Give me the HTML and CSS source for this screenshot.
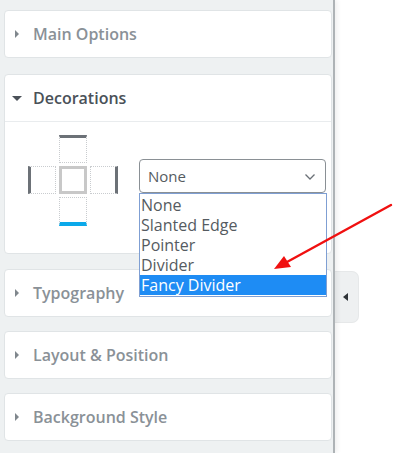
FILE: index.html
```html
<!DOCTYPE html>
<html>
<head>
<meta charset="utf-8">
<link rel="stylesheet" href="styles.css">
</head>
<body>
<div class="page">
  <aside class="panel">
    <section class="card">
      <div class="card-head"><span class="caret-right"></span><span class="title">Main Options</span></div>
    </section>
    <section class="card open">
      <div class="card-head"><span class="caret-down"></span><span class="title">Decorations</span></div>
      <div class="card-body">
        <div class="deco-grid">
          <div class="cell empty"></div>
          <div class="cell bar-top"></div>
          <div class="cell empty"></div>
          <div class="cell bar-left"></div>
          <div class="cell center"></div>
          <div class="cell bar-right"></div>
          <div class="cell empty"></div>
          <div class="cell bar-bottom"></div>
          <div class="cell empty"></div>
        </div>
        <div class="select-wrap">
          <div class="select">
            <span>None</span>
            <svg class="chev" width="12" height="8" viewBox="0 0 12 8"><path d="M1.5 1.5 L6 6 L10.5 1.5" fill="none" stroke="#6a7076" stroke-width="1.3"/></svg>
          </div>
          <ul class="options">
            <li>None</li>
            <li>Slanted Edge</li>
            <li>Pointer</li>
            <li>Divider</li>
            <li class="sel">Fancy Divider</li>
          </ul>
        </div>
      </div>
    </section>
    <section class="card after-open">
      <div class="card-head"><span class="caret-right"></span><span class="title">Typography</span></div>
    </section>
    <section class="card">
      <div class="card-head"><span class="caret-right"></span><span class="title">Layout &amp; Position</span></div>
    </section>
    <section class="card">
      <div class="card-head"><span class="caret-right"></span><span class="title">Background Style</span></div>
    </section>
  </aside>
  <div class="canvas">
    <div class="toggle"><span class="toggle-tri"></span></div>
  </div>
  <svg class="arrow" width="417" height="453" viewBox="0 0 417 453">
    <line x1="391" y1="205" x2="287" y2="262" stroke="#f01010" stroke-width="2.4" stroke-linecap="round"/>
    <polygon points="274,269 284,256 291,267" fill="#f01010"/>
  </svg>
</div>
</body>
</html>
```
FILE: styles.css
```css
* { box-sizing: border-box; }
html, body { margin: 0; padding: 0; background: #fff; }
body { font-family: "Open Sans", "Liberation Sans", sans-serif; }
.page {
  position: relative;
  display: flex;
  width: 417px;
  height: 453px;
  overflow: hidden;
}
.panel {
  width: 335px;
  flex: none;
  background: #eef1f2;
  border-right: 2px solid #aeb3b6;
  padding: 10px 1px 0 4px;
  display: flex;
  flex-direction: column;
  gap: 14px;
  box-shadow: 2px 0 5px rgba(0,0,0,0.07);
  position: relative;
  z-index: 1;
}
.card {
  background: #fff;
  border: 1px solid #e0e4e6;
  border-radius: 4px;
  flex: none;
}
.card.open { margin-top: 2px; }
.card.after-open { margin-top: 1px; }
.card-head {
  height: 46px;
  display: flex;
  align-items: center;
  padding-left: 9px;
}
.open .card-head { border-bottom: 1px solid #e9ecee; height: 47px; }
.title {
  font-family: "Open Sans", sans-serif;
  font-weight: 600;
  font-size: 16px;
  color: #8a9197;
}
.open .title { color: #4a5158; }
.caret-right {
  width: 0; height: 0;
  border-top: 4px solid transparent;
  border-bottom: 4px solid transparent;
  border-left: 4px solid #80878d;
  margin-left: 1px;
  margin-right: 14px;
}
.caret-down {
  width: 0; height: 0;
  border-left: 5px solid transparent;
  border-right: 5px solid transparent;
  border-top: 5px solid #4a5158;
  margin-left: -2px;
  margin-right: 11px;
}
.card-body {
  height: 131px;
  display: flex;
  padding: 13px 0 0 23px;
  gap: 21px;
}
.deco-grid {
  display: grid;
  grid-template-columns: 28px 28px 28px;
  grid-template-rows: 28px 28px 29px;
  gap: 3px;
  flex: none;
}
.cell.empty { visibility: hidden; }
.cell { border: 1px dotted #c9cccf; }
.bar-top { border-top: 3px solid #6c7177; }
.bar-left { border-left: 3px solid #6c7177; }
.bar-right { border-right: 3px solid #6c7177; }
.bar-bottom { border-bottom: 4px solid #0ba9ea; }
.center { border: 3px solid #c8c8c8; }
.select-wrap {
  position: relative;
  margin-top: 24px;
}
.select {
  width: 187px;
  height: 34px;
  border: 1px solid #8a9095;
  border-radius: 4px;
  display: flex;
  align-items: center;
  justify-content: space-between;
  padding: 0 9px 0 8px;
  font-family: "Open Sans", sans-serif;
  font-size: 15px;
  color: #555b61;
}
.chev { margin-top: 1px; }
.options {
  position: absolute;
  left: 0;
  top: 34px;
  width: 188px;
  margin: 0;
  padding: 1px 0;
  list-style: none;
  background: #fff;
  border: 1px solid #7f9fd3;
  font-family: "Open Sans", sans-serif;
  font-size: 16px;
  color: #555b61;
  z-index: 3;
}
.options li {
  height: 20px;
  line-height: 20px;
  padding-left: 1px;
  white-space: nowrap;
}
.options li.sel {
  background: #1e8cf4;
  color: #fff;
}
.canvas {
  flex: 1;
  position: relative;
}
.toggle {
  position: absolute;
  left: 0;
  top: 271px;
  width: 24px;
  height: 52px;
  background: #eef0f1;
  border-radius: 0 7px 7px 0;
  border: 1px solid #e6e8e9;
  border-left: none;
  display: flex;
  align-items: center;
  padding-left: 8px;
}
.toggle-tri {
  width: 0; height: 0;
  border-top: 4.5px solid transparent;
  border-bottom: 4.5px solid transparent;
  border-right: 5px solid #2f3438;
}
.arrow {
  position: absolute;
  left: 0;
  top: 0;
  pointer-events: none;
  z-index: 5;
}
```
